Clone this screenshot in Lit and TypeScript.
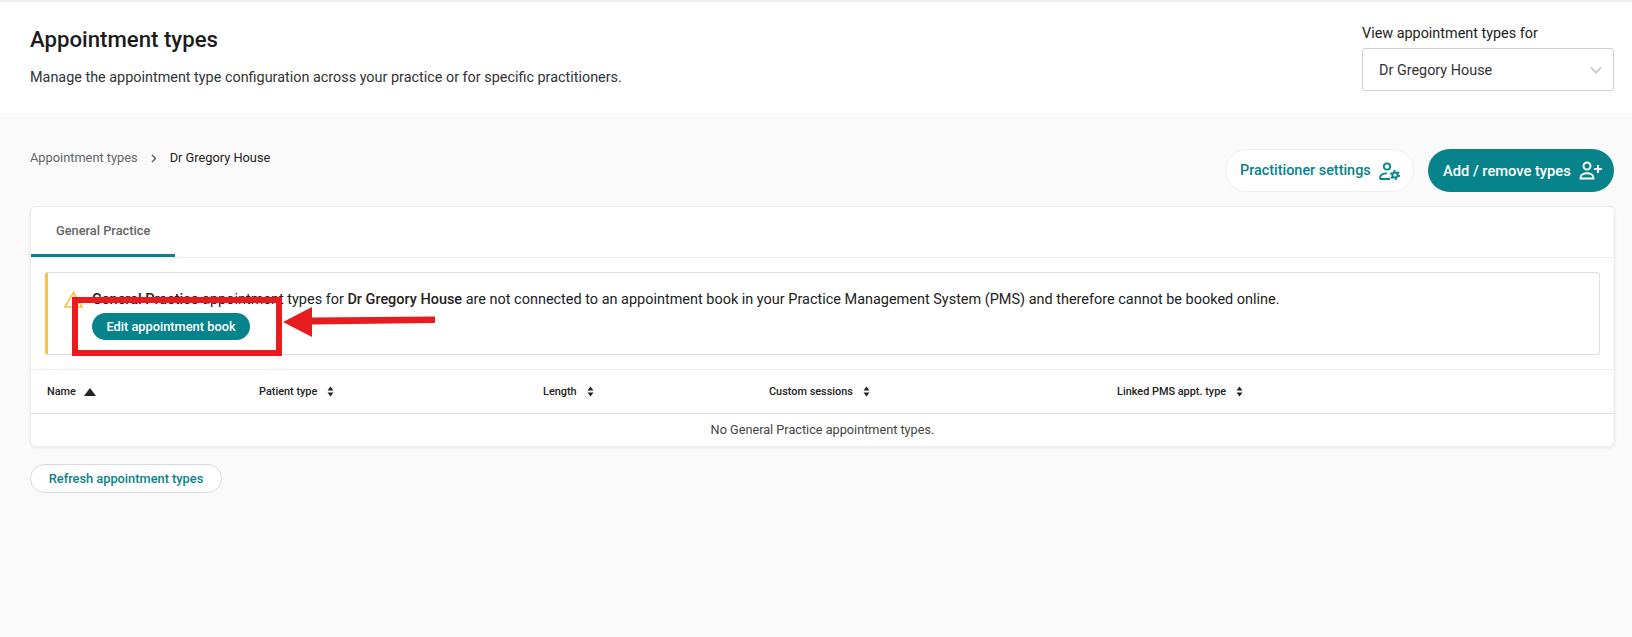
import { LitElement, html, css, svg } from "lit";
import { customElement } from "lit/decorators.js";

const sortIcon = html`<svg class="sort" width="7" height="11" viewBox="0 0 7 11"><path d="M3.5 0.5 6.5 4.5H.5ZM3.5 10.5.5 6.5H6.5Z" fill="#222"/></svg>`;
const cols: [string, boolean][] = [["Name", true], ["Patient type", false], ["Length", false], ["Custom sessions", false], ["Linked PMS appt. type", false]];

@customElement("app-root")
export class AppRoot extends LitElement {
  static styles = css`
    :host { display: block; position: relative; width: 1632px; height: 637px; overflow: hidden; background: #fafafa; font-family: Roboto, "Liberation Sans", sans-serif; color: #222; font-size: 14px; }
    * { box-sizing: border-box; }
    svg { flex: none; }
    .top { height: 113px; background: #fff; border-top: 2px solid #eee; display: flex; justify-content: space-between; padding: 0 18px 0 30px; }
    h1 { margin: 0; font-size: 22.2px; font-weight: 500; line-height: 28px; color: #1c1c1c; padding-top: 23px; }
    .sub { margin: 15px 0 0; font-size: 14.4px; line-height: 20px; color: #333; }
    .picker { width: 252px; padding-top: 22px; }
    .picker label { display: block; font-size: 14.4px; line-height: 20px; color: #222; margin-bottom: 4px; }
    .select { height: 43px; border: 1px solid #d0d0d0; border-radius: 3px; display: flex; align-items: center; justify-content: space-between; padding: 1px 11px 0 16px; font-size: 14.4px; color: #333; }
    .main { padding: 36px 17px 0 30px; }
    .bar { display: flex; justify-content: space-between; align-items: flex-start; height: 57px; margin-right: 1px; }
    .crumbs { display: flex; align-items: center; gap: 13px; font-size: 12.8px; line-height: 18px; color: #666; }
    .crumbs b { font-weight: 400; color: #222; }
    .actions { display: flex; gap: 14px; }
    .btn { height: 43px; border-radius: 22px; display: flex; align-items: center; justify-content: space-between; font-weight: 500; white-space: nowrap; }
    .ghost { width: 189px; background: #fff; border: 1px solid #eee; color: #07838b; font-size: 14.4px; padding: 0 12px 0 14px; }
    .solid { width: 186px; background: #07838b; color: #fff; font-size: 14.7px; padding: 0 11px 0 15px; }
    .card { width: 1585px; background: #fff; border: 1px solid #ececec; border-radius: 6px; box-shadow: 0 1px 3px rgba(0,0,0,.08); }
    .tabs { height: 51px; border-bottom: 1px solid #eee; display: flex; }
    .tab { width: 144px; height: 50px; border-bottom: 3px solid #07838b; font-size: 12.8px; font-weight: 500; color: #666; padding: 15px 0 0 25px; line-height: 18px; }
    .alert-wrap { padding: 14px 14px 14px; border-bottom: 1px solid #eee; }
    .alert { height: 83px; background: #fff; border: 1px solid #dedede; border-left: 3px solid #fcc04b; border-radius: 3px; display: flex; gap: 9px; padding: 16px 0 0 16px; }
    .alert p { margin: 0 0 2px; line-height: 22px; font-size: 14.46px; color: #222; }
    .alert strong { font-weight: 500; }
    .warn { margin-top: 2px; }
    .edit { display: inline-flex; align-items: center; justify-content: center; width: 158px; height: 27px; background: #07838b; color: #fff; border-radius: 14px; font-size: 12.8px; font-weight: 500; }
    .thead { display: grid; grid-template-columns: 212px 284px 226px 348px 1fr; height: 44px; border-bottom: 1px solid #e2e2e2; align-items: center; }
    .th { display: flex; align-items: center; gap: 10px; padding-left: 16px; font-size: 10.9px; font-weight: 500; color: #222; }
    .th .up { margin-left: -2px; }
    .empty { height: 32px; padding-bottom: 2px; display: flex; align-items: center; justify-content: center; font-size: 12.7px; color: #444; }
    .refresh { display: flex; align-items: center; justify-content: center; width: 192px; height: 29px; margin-top: 17px; border: 1px solid #d9d9d9; border-radius: 15px; background: #fff; color: #07838b; font-size: 12.8px; font-weight: 500; }
    .note { position: absolute; left: 0; top: 0; pointer-events: none; }
  `;

  render() {
    return html`
      <div class="top">
        <div>
          <h1>Appointment types</h1>
          <p class="sub">Manage the appointment type configuration across your practice or for specific practitioners.</p>
        </div>
        <div class="picker">
          <label>View appointment types for</label>
          <div class="select">Dr Gregory House
            <svg width="12" height="8" viewBox="0 0 12 8"><path d="M1 1.5 6 6.5 11 1.5" fill="none" stroke="#ccc" stroke-width="2"/></svg>
          </div>
        </div>
      </div>
      <div class="main">
        <div class="bar">
          <div class="crumbs"><span>Appointment types</span>
            <svg width="6" height="9" viewBox="0 0 6 9"><path d="M1 1 4.5 4.5 1 8" fill="none" stroke="#555" stroke-width="1.3"/></svg>
            <b>Dr Gregory House</b></div>
          <div class="actions">
            <div class="btn ghost">Practitioner settings
              <svg width="22" height="18" viewBox="0 0 22 18" fill="none" stroke="#07838b" stroke-width="1.8">
                <circle cx="8" cy="4.5" r="3.2"/>
                <path d="M11 17H2a1 1 0 0 1-1-1C1 13 4 11.3 8 11.3"/>
                <circle cx="16" cy="13" r="2.6" stroke-width="2"/>
                <circle cx="16" cy="13" r="4.2" stroke-width="1.7" stroke-dasharray="2.2 2.2"/>
              </svg>
            </div>
            <div class="btn solid">Add / remove types
              <svg width="24" height="19" viewBox="0 0 24 19" fill="none" stroke="#fff" stroke-width="1.9">
                <circle cx="8" cy="5" r="3.5"/>
                <path d="M1.5 17.5v-.5C1.5 14 4.5 12.3 8 12.3s6.5 1.7 6.5 4.7v.5z"/>
                <path d="M15 8h8M19 4v8"/>
              </svg>
            </div>
          </div>
        </div>
        <div class="card">
          <div class="tabs"><div class="tab">General Practice</div></div>
          <div class="alert-wrap">
            <div class="alert">
              <svg class="warn" width="19" height="17" viewBox="0 0 19 17"><path d="M9.5 1.5 18 16H1Z" fill="none" stroke="#fcc04b" stroke-width="1.6"/></svg>
              <div>
                <p><strong>General Practice</strong> appointment types for <strong>Dr Gregory House</strong> are not connected to an appointment book in your Practice Management System (PMS) and therefore cannot be booked online.</p>
                <div class="edit">Edit appointment book</div>
              </div>
            </div>
          </div>
          <div class="thead">
            ${cols.map(([c, active]) => html`<div class="th">${c}${active ? html`<svg class="up" width="12" height="8" viewBox="0 0 12 8"><path d="M6 0 12 8H0Z" fill="#222"/></svg>` : sortIcon}</div>`)}
          </div>
          <div class="empty">No General Practice appointment types.</div>
        </div>
        <div class="refresh">Refresh appointment types</div>
      </div>
      <svg class="note" width="1632" height="637" viewBox="0 0 1632 637">
        ${svg`<rect x="75" y="300" width="204" height="53" fill="none" stroke="#e81c1f" stroke-width="6"/>
        <path d="M283 322 312 307V317.5L435 316.5V323L312 324.5V337Z" fill="#e81c1f"/>`}
      </svg>
    `;
  }
}
